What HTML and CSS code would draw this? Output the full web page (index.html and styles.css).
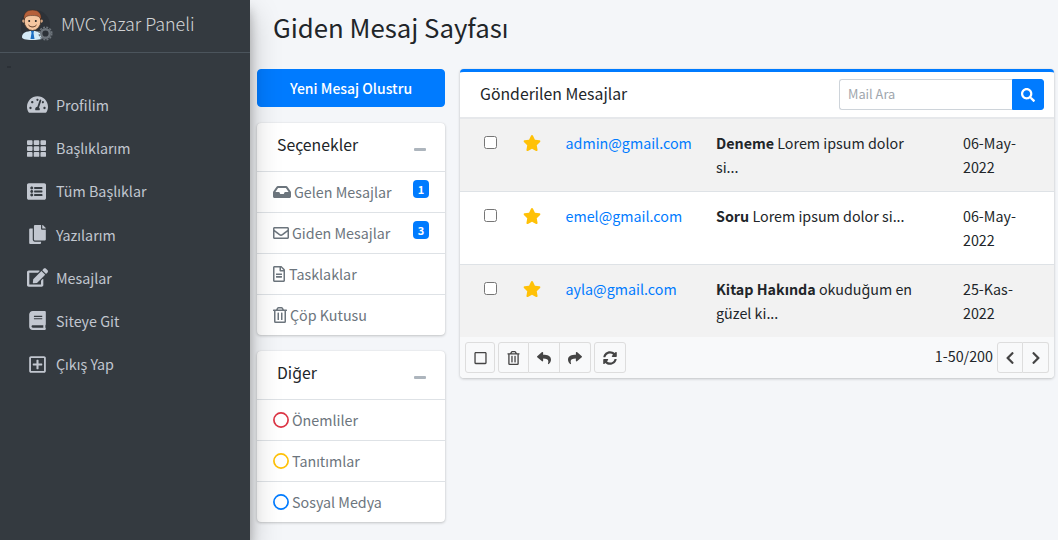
FILE: index.html
```html
<!DOCTYPE html>
<html lang="tr">
<head>
<meta charset="utf-8">
<title>Giden Mesaj Sayfası</title>
<link rel="stylesheet" href="styles.css">
</head>
<body>
<svg class="defs" width="0" height="0" aria-hidden="true">
<defs>
<symbol id="i-gauge" viewBox="0 0 576 512"><path d="M288 32C128.94 32 0 160.94 0 320c0 52.8 14.25 102.26 39.06 144.8 5.61 9.62 16.3 15.2 27.44 15.2h443c11.14 0 21.83-5.58 27.44-15.2C561.75 422.26 576 372.8 576 320c0-159.06-128.94-288-288-288zm0 64c14.71 0 26.58 10.13 30.32 23.65-1.11 2.26-2.64 4.23-3.45 6.67l-9.22 27.67c-5.13 3.49-10.97 6.01-17.64 6.01-17.67 0-32-14.33-32-32S270.33 96 288 96zM96 384c-17.67 0-32-14.33-32-32s14.33-32 32-32 32 14.33 32 32-14.33 32-32 32zm48-160c-17.67 0-32-14.33-32-32s14.33-32 32-32 32 14.33 32 32-14.33 32-32 32zm246.77-72.41l-61.33 184C343.13 347.33 352 364.54 352 384c0 11.72-3.38 22.55-8.88 32H232.88c-5.5-9.45-8.88-20.28-8.88-32 0-33.94 26.5-61.43 59.9-63.59l61.34-184.01c4.17-12.56 17.73-19.45 30.36-15.17 12.57 4.19 19.35 17.77 15.17 30.36zm14.66 57.2l15.52-46.55c3.47-1.29 7.13-2.23 11.05-2.23 17.67 0 32 14.33 32 32s-14.33 32-32 32c-11.38-.01-20.89-6.28-26.57-15.22zM480 384c-17.67 0-32-14.33-32-32s14.33-32 32-32 32 14.33 32 32-14.33 32-32 32z"/></symbol>
<symbol id="i-th" viewBox="0 0 512 512"><path d="M24 32h101a24 24 0 0 1 24 24v80a24 24 0 0 1-24 24H24a24 24 0 0 1-24-24V56a24 24 0 0 1 24-24zm181 0h102a24 24 0 0 1 24 24v80a24 24 0 0 1-24 24H205a24 24 0 0 1-24-24V56a24 24 0 0 1 24-24zm182 0h101a24 24 0 0 1 24 24v80a24 24 0 0 1-24 24H387a24 24 0 0 1-24-24V56a24 24 0 0 1 24-24zM24 192h101a24 24 0 0 1 24 24v80a24 24 0 0 1-24 24H24a24 24 0 0 1-24-24v-80a24 24 0 0 1 24-24zm181 0h102a24 24 0 0 1 24 24v80a24 24 0 0 1-24 24H205a24 24 0 0 1-24-24v-80a24 24 0 0 1 24-24zm182 0h101a24 24 0 0 1 24 24v80a24 24 0 0 1-24 24H387a24 24 0 0 1-24-24v-80a24 24 0 0 1 24-24zM24 352h101a24 24 0 0 1 24 24v80a24 24 0 0 1-24 24H24a24 24 0 0 1-24-24v-80a24 24 0 0 1 24-24zm181 0h102a24 24 0 0 1 24 24v80a24 24 0 0 1-24 24H205a24 24 0 0 1-24-24v-80a24 24 0 0 1 24-24zm182 0h101a24 24 0 0 1 24 24v80a24 24 0 0 1-24 24H387a24 24 0 0 1-24-24v-80a24 24 0 0 1 24-24z"/></symbol>
<symbol id="i-list" viewBox="0 0 512 512"><path d="M464 480H48c-26.51 0-48-21.49-48-48V80c0-26.51 21.49-48 48-48h416c26.51 0 48 21.49 48 48v352c0 26.51-21.49 48-48 48zM128 120c-22.091 0-40 17.909-40 40s17.909 40 40 40 40-17.909 40-40-17.909-40-40-40zm0 96c-22.091 0-40 17.909-40 40s17.909 40 40 40 40-17.909 40-40-17.909-40-40-40zm0 96c-22.091 0-40 17.909-40 40s17.909 40 40 40 40-17.909 40-40-17.909-40-40-40zm288-136v-32c0-6.627-5.373-12-12-12H204c-6.627 0-12 5.373-12 12v32c0 6.627 5.373 12 12 12h200c6.627 0 12-5.373 12-12zm0 96v-32c0-6.627-5.373-12-12-12H204c-6.627 0-12 5.373-12 12v32c0 6.627 5.373 12 12 12h200c6.627 0 12-5.373 12-12zm0 96v-32c0-6.627-5.373-12-12-12H204c-6.627 0-12 5.373-12 12v32c0 6.627 5.373 12 12 12h200c6.627 0 12-5.373 12-12z"/></symbol>
<symbol id="i-copy" viewBox="0 0 448 512"><path d="M320 448v40c0 13.255-10.745 24-24 24H24c-13.255 0-24-10.745-24-24V120c0-13.255 10.745-24 24-24h72v296c0 30.879 25.121 56 56 56h168zm0-344V0H152c-13.255 0-24 10.745-24 24v368c0 13.255 10.745 24 24 24h272c13.255 0 24-10.745 24-24V128H344c-13.2 0-24-10.8-24-24zm120.971-31.029L375.029 7.029A24 24 0 0 0 358.059 0H352v96h96v-6.059a24 24 0 0 0-7.029-16.97z"/></symbol>
<symbol id="i-edit" viewBox="0 0 576 512"><path d="M402.6 83.2l90.2 90.2c3.8 3.8 3.8 10 0 13.8L274.4 405.6l-92.8 10.3c-12.4 1.4-22.9-9.1-21.5-21.5l10.3-92.8L388.8 83.2c3.8-3.8 10-3.8 13.8 0zm162-22.9l-48.8-48.8c-15.2-15.2-39.9-15.2-55.2 0l-35.4 35.4c-3.8 3.8-3.8 10 0 13.8l90.2 90.2c3.8 3.8 10 3.8 13.8 0l35.4-35.4c15.2-15.3 15.2-40 0-55.2zM384 346.2V448H64V128h229.8c3.2 0 6.2-1.3 8.5-3.5l40-40c7.6-7.6 2.2-20.5-8.5-20.5H48C21.5 64 0 85.5 0 112v352c0 26.5 21.5 48 48 48h352c26.5 0 48-21.5 48-48V306.2c0-10.7-12.9-16-20.5-8.5l-40 40c-2.2 2.3-3.5 5.3-3.5 8.5z"/></symbol>
<symbol id="i-book" viewBox="0 0 448 512"><path d="M448 360V24c0-13.3-10.7-24-24-24H96C43 0 0 43 0 96v320c0 53 43 96 96 96h328c13.3 0 24-10.7 24-24v-16c0-7.5-3.5-14.3-8.9-18.7-4.2-15.4-4.2-59.3 0-74.7 5.4-4.3 8.9-11.1 8.9-18.6zM128 134c0-3.3 2.7-6 6-6h212c3.3 0 6 2.7 6 6v20c0 3.3-2.7 6-6 6H134c-3.3 0-6-2.7-6-6v-20zm0 64c0-3.3 2.7-6 6-6h212c3.3 0 6 2.7 6 6v20c0 3.3-2.7 6-6 6H134c-3.3 0-6-2.7-6-6v-20zm253.4 250H96c-17.7 0-32-14.3-32-32 0-17.6 14.4-32 32-32h285.4c-1.9 17.1-1.9 46.9 0 64z"/></symbol>
<symbol id="i-plus" viewBox="0 0 448 512"><path d="M352 240v32c0 6.6-5.4 12-12 12h-88v88c0 6.6-5.4 12-12 12h-32c-6.6 0-12-5.4-12-12v-88h-88c-6.6 0-12-5.4-12-12v-32c0-6.6 5.4-12 12-12h88v-88c0-6.6 5.4-12 12-12h32c6.6 0 12 5.4 12 12v88h88c6.6 0 12 5.4 12 12zm96-160v352c0 26.5-21.5 48-48 48H48c-26.5 0-48-21.5-48-48V80c0-26.5 21.5-48 48-48h352c26.5 0 48 21.5 48 48zm-48 346V86c0-3.3-2.7-6-6-6H54c-3.3 0-6 2.7-6 6v340c0 3.3 2.7 6 6 6h340c3.3 0 6-2.7 6-6z"/></symbol>
<symbol id="i-inbox" viewBox="0 0 576 512"><path d="M567.938 243.908L462.25 85.374A48.003 48.003 0 0 0 422.311 64H153.689a48 48 0 0 0-39.938 21.374L8.062 243.908A47.994 47.994 0 0 0 0 270.533V400c0 26.51 21.49 48 48 48h480c26.51 0 48-21.49 48-48V270.533a47.994 47.994 0 0 0-8.062-26.625zM162.252 128h251.497l85.333 128H376l-32 64H232l-32-64H76.918l85.334-128z"/></symbol>
<symbol id="i-mail" viewBox="0 0 512 512"><path d="M464 64H48C21.49 64 0 85.49 0 112v288c0 26.51 21.49 48 48 48h416c26.51 0 48-21.49 48-48V112c0-26.51-21.49-48-48-48zm0 48v40.805c-22.422 18.259-58.168 46.651-134.587 106.49-16.841 13.247-50.201 45.072-73.413 44.701-23.208.375-56.579-31.459-73.413-44.701C106.18 199.465 70.425 171.067 48 152.805V112h416zM48 400V214.398c22.914 18.251 55.409 43.862 104.938 82.646 21.857 17.205 60.134 55.186 103.062 54.955 42.717.231 80.509-37.199 103.053-54.947 49.528-38.783 82.032-64.401 104.947-82.653V400H48z"/></symbol>
<symbol id="i-file" viewBox="0 0 384 512"><path d="M288 248v28c0 6.6-5.4 12-12 12H108c-6.6 0-12-5.4-12-12v-28c0-6.6 5.4-12 12-12h168c6.6 0 12 5.4 12 12zm-12 72H108c-6.6 0-12 5.4-12 12v28c0 6.6 5.4 12 12 12h168c6.6 0 12-5.4 12-12v-28c0-6.6-5.4-12-12-12zm108-188.1V464c0 26.5-21.5 48-48 48H48c-26.5 0-48-21.5-48-48V48C0 21.5 21.5 0 48 0h204.1C264.8 0 277 5.1 286 14.1L369.9 98c9 8.9 14.1 21.2 14.1 33.9zm-128-80V128h76.1L256 51.9zM336 464V176H232c-13.3 0-24-10.7-24-24V48H48v416h288z"/></symbol>
<symbol id="i-trash" viewBox="0 0 448 512"><path d="M268 416h24a12 12 0 0 0 12-12V188a12 12 0 0 0-12-12h-24a12 12 0 0 0-12 12v216a12 12 0 0 0 12 12zM432 80h-82.41l-34-56.7A48 48 0 0 0 274.41 0H173.59a48 48 0 0 0-41.16 23.3L98.41 80H16A16 16 0 0 0 0 96v16a16 16 0 0 0 16 16h16v336a48 48 0 0 0 48 48h288a48 48 0 0 0 48-48V128h16a16 16 0 0 0 16-16V96a16 16 0 0 0-16-16zM171.84 50.91A6 6 0 0 1 177 48h94a6 6 0 0 1 5.15 2.91L293.61 80H154.39zM368 464H80V128h288zm-212-48h24a12 12 0 0 0 12-12V188a12 12 0 0 0-12-12h-24a12 12 0 0 0-12 12v216a12 12 0 0 0 12 12z"/></symbol>
<symbol id="i-star" viewBox="0 0 576 512"><path d="M259.3 17.8L194 150.2 47.9 171.5c-26.2 3.8-36.7 36.1-17.7 54.6l105.7 103-25 145.5c-4.5 26.3 23.2 46 46.4 33.7L288 439.6l130.7 68.7c23.2 12.2 50.9-7.4 46.4-33.7l-25-145.5 105.7-103c19-18.5 8.5-50.8-17.7-54.6L382 150.2 316.7 17.8c-11.7-23.6-45.6-23.9-57.4 0z"/></symbol>
<symbol id="i-search" viewBox="0 0 512 512"><path d="M505 442.7L405.3 343c-4.5-4.5-10.6-7-17-7H372c27.6-35.3 44-79.7 44-128C416 93.1 322.9 0 208 0S0 93.1 0 208s93.1 208 208 208c48.3 0 92.7-16.4 128-44v16.3c0 6.4 2.5 12.5 7 17l99.7 99.7c9.4 9.4 24.6 9.4 33.9 0l28.3-28.3c9.4-9.4 9.4-24.6.1-34zM208 336c-70.7 0-128-57.2-128-128 0-70.7 57.2-128 128-128 70.7 0 128 57.2 128 128 0 70.7-57.2 128-128 128z"/></symbol>
<symbol id="i-reply" viewBox="0 0 512 512"><path d="M8.309 189.836L184.313 37.851C199.719 24.546 224 35.347 224 56.015v80.053c160.629 1.839 288 34.032 288 186.258 0 61.441-39.581 122.309-83.333 154.132-13.653 9.931-33.111-2.533-28.077-18.631 45.344-145.012-21.507-183.51-176.59-185.742V360c0 20.7-24.3 31.453-39.687 18.164l-176.004-152c-11.071-9.562-11.086-26.753 0-36.328z"/></symbol>
<symbol id="i-share" viewBox="0 0 512 512"><path d="M503.691 189.836L327.687 37.851C312.281 24.546 288 35.347 288 56.015v80.053C127.371 137.907 0 170.1 0 322.326c0 61.441 39.581 122.309 83.333 154.132 13.653 9.931 33.111-2.533 28.077-18.631C66.066 312.814 132.917 274.316 288 272.085V360c0 20.7 24.3 31.453 39.687 18.164l176.004-152c11.071-9.562 11.086-26.753 0-36.328z"/></symbol>
<symbol id="i-sync" viewBox="0 0 512 512"><path d="M370.72 133.28C339.458 104.008 298.888 87.962 255.848 88c-77.458.068-144.328 53.178-162.791 126.85-1.344 5.363-6.122 9.15-11.651 9.15H24.103c-7.498 0-13.194-6.807-11.807-14.176C33.933 94.924 134.813 8 256 8c66.448 0 126.791 26.136 171.315 68.685L463.03 40.97C478.149 25.851 504 36.559 504 57.941V192c0 13.255-10.745 24-24 24H345.941c-21.382 0-32.09-25.851-16.971-40.971l41.75-41.749zM32 296h134.059c21.382 0 32.09 25.851 16.971 40.971l-41.75 41.75c31.262 29.273 71.835 45.319 114.876 45.28 77.418-.07 144.315-53.144 162.787-126.849 1.344-5.363 6.122-9.15 11.651-9.15h57.304c7.498 0 13.194 6.807 11.807 14.176C478.067 417.076 377.187 504 256 504c-66.448 0-126.791-26.136-171.315-68.685L48.97 471.03C33.851 486.149 8 475.441 8 454.059V320c0-13.255 10.745-24 24-24z"/></symbol>
<symbol id="i-left" viewBox="0 0 320 512"><path d="M34.52 239.03L228.87 44.69c9.37-9.37 24.57-9.37 33.94 0l22.67 22.67c9.36 9.36 9.37 24.52.04 33.9L131.49 256l154.02 154.75c9.34 9.38 9.32 24.54-.04 33.9l-22.67 22.67c-9.37 9.37-24.57 9.37-33.94 0L34.52 272.97c-9.37-9.37-9.37-24.57 0-33.94z"/></symbol>
<symbol id="i-right" viewBox="0 0 320 512"><path d="M285.476 272.971L91.132 467.314c-9.373 9.373-24.569 9.373-33.941 0l-22.667-22.667c-9.357-9.357-9.375-24.522-.04-33.901L188.505 256 34.484 101.255c-9.335-9.379-9.317-24.544.04-33.901l22.667-22.667c9.373-9.373 24.569-9.373 33.941 0L285.475 239.03c9.373 9.372 9.373 24.568.001 33.941z"/></symbol>
<symbol id="i-square" viewBox="0 0 448 512"><path d="M400 32H48C21.5 32 0 53.5 0 80v352c0 26.5 21.5 48 48 48h352c26.5 0 48-21.5 48-48V80c0-26.5-21.500-48-48-48zm-6 400H54c-3.3 0-6-2.700-6-6V86c0-3.300 2.700-6 6-6h340c3.300 0 6 2.700 6 6v340c0 3.300-2.700 6-6 6z"/></symbol>
<symbol id="i-ring" viewBox="0 0 16 16"><circle cx="8" cy="8" r="7.100" fill="none" stroke="currentColor" stroke-width="1.700"/></symbol>
</defs>
</svg>
<div class="app">
  <aside class="sidebar">
    <a class="brand" href="#">
      <svg class="brand-logo" viewBox="0 0 33 33" aria-hidden="true">
        <circle cx="14" cy="17" r="15" fill="#2d3238"/>
        <path d="M1 29c0-4 4-6 10.500-6S22 25 22 29c0 2-3 3-10.500 3S1 31 1 29z" fill="#d4eaf7"/>
        <path d="M9.800 22.500h3.400l-.7 2.500 1 6h-4l1-6z" fill="#1c6fc4"/>
        <circle cx="3" cy="13" r="1.800" fill="#eeb78e"/>
        <circle cx="20" cy="13" r="1.800" fill="#eeb78e"/>
        <ellipse cx="11.500" cy="13" rx="8.300" ry="9.500" fill="#f5c6a0" stroke="#3a2a20" stroke-width=".7"/>
        <path d="M3 12C2 5 6 2 11.500 2S21 5 20 12c-1-3-2.500-4.500-8.500-4.500S4 9 3 12z" fill="#b5603a" stroke="#3a2a20" stroke-width=".5"/>
        <circle cx="8.200" cy="13" r="1" fill="#222"/>
        <circle cx="14.800" cy="13" r="1" fill="#222"/>
        <path d="M7.500 17c2 2.500 6 2.500 8 0" fill="none" stroke="#4a2b1c" stroke-width="1"/>
        <circle cx="24.500" cy="25.500" r="4.300" fill="#2d3238" stroke="#6d747b" stroke-width="2.400"/>
        <circle cx="24.500" cy="25.500" r="6.300" fill="none" stroke="#6d747b" stroke-width="1.500" stroke-dasharray="2 1.300"/>
      </svg>
      <span class="brand-text">MVC Yazar Paneli</span>
    </a>
    <span class="brand-dot"></span>
    <nav class="side-nav">
      <a class="side-link" href="#"><span class="side-icon"><svg class="s-gauge"><use href="#i-gauge"/></svg></span>Profilim</a>
      <a class="side-link" href="#"><span class="side-icon"><svg class="s-th"><use href="#i-th"/></svg></span>Başlıklarım</a>
      <a class="side-link" href="#"><span class="side-icon"><svg class="s-th"><use href="#i-list"/></svg></span>Tüm Başlıklar</a>
      <a class="side-link" href="#"><span class="side-icon"><svg class="s-book"><use href="#i-copy"/></svg></span>Yazılarım</a>
      <a class="side-link" href="#"><span class="side-icon"><svg class="s-gauge"><use href="#i-edit"/></svg></span>Mesajlar</a>
      <a class="side-link" href="#"><span class="side-icon"><svg class="s-book"><use href="#i-book"/></svg></span>Siteye Git</a>
      <a class="side-link" href="#"><span class="side-icon"><svg class="s-book"><use href="#i-plus"/></svg></span>Çıkış Yap</a>
    </nav>
  </aside>
  <main class="content">
    <h1 class="page-title">Giden Mesaj Sayfası</h1>
    <div class="columns">
      <div class="left-col">
        <a class="new-btn" href="#">Yeni Mesaj Olustru</a>
        <section class="card">
          <header class="card-head"><h3>Seçenekler</h3><span class="minus"></span></header>
          <ul class="folder-list">
            <li><a href="#"><svg class="f-inbox"><use href="#i-inbox"/></svg>Gelen Mesajlar</a><span class="badge">1</span></li>
            <li><a href="#"><svg class="f-mail"><use href="#i-mail"/></svg>Giden Mesajlar</a><span class="badge">3</span></li>
            <li><a href="#"><svg class="f-file"><use href="#i-file"/></svg>Tasklaklar</a></li>
            <li><a href="#"><svg class="f-trash"><use href="#i-trash"/></svg>Çöp Kutusu</a></li>
          </ul>
        </section>
        <section class="card">
          <header class="card-head"><h3>Diğer</h3><span class="minus"></span></header>
          <ul class="folder-list">
            <li><a href="#"><svg class="ring ring-red"><use href="#i-ring"/></svg>Önemliler</a></li>
            <li><a href="#"><svg class="ring ring-yellow"><use href="#i-ring"/></svg>Tanıtımlar</a></li>
            <li><a href="#"><svg class="ring ring-blue"><use href="#i-ring"/></svg>Sosyal Medya</a></li>
          </ul>
        </section>
      </div>
      <section class="card mail-card">
        <header class="mail-head">
          <h3>Gönderilen Mesajlar</h3>
          <div class="search">
            <input type="text" placeholder="Mail Ara">
            <button type="button"><svg><use href="#i-search"/></svg></button>
          </div>
        </header>
        <table class="mail-table">
          <tbody>
            <tr>
              <td class="c-check"><input type="checkbox"></td>
              <td class="c-star"><svg><use href="#i-star"/></svg></td>
              <td class="c-mail"><a href="#">admin@gmail.com</a></td>
              <td class="c-subject"><b>Deneme</b> Lorem ipsum dolor si...</td>
              <td class="c-date">06-May-2022</td>
            </tr>
            <tr>
              <td class="c-check"><input type="checkbox"></td>
              <td class="c-star"><svg><use href="#i-star"/></svg></td>
              <td class="c-mail"><a href="#">emel@gmail.com</a></td>
              <td class="c-subject"><b>Soru</b> Lorem ipsum dolor si...</td>
              <td class="c-date">06-May-2022</td>
            </tr>
            <tr>
              <td class="c-check"><input type="checkbox"></td>
              <td class="c-star"><svg><use href="#i-star"/></svg></td>
              <td class="c-mail"><a href="#">ayla@gmail.com</a></td>
              <td class="c-subject"><b>Kitap Hakında</b> okuduğum en güzel ki...</td>
              <td class="c-date">25-Kas-2022</td>
            </tr>
          </tbody>
        </table>
        <footer class="mail-foot">
          <button class="tool" type="button"><svg class="t-square"><use href="#i-square"/></svg></button>
          <div class="tool-group">
            <button class="tool" type="button"><svg class="t-square"><use href="#i-trash"/></svg></button>
            <button class="tool" type="button"><svg class="t-arrow"><use href="#i-reply"/></svg></button>
            <button class="tool" type="button"><svg class="t-arrow"><use href="#i-share"/></svg></button>
          </div>
          <button class="tool tool-wide" type="button"><svg class="t-arrow"><use href="#i-sync"/></svg></button>
          <span class="pager-text">1-50/200</span>
          <div class="tool-group pager">
            <button class="tool" type="button"><svg class="t-chev"><use href="#i-left"/></svg></button>
            <button class="tool" type="button"><svg class="t-chev"><use href="#i-right"/></svg></button>
          </div>
        </footer>
      </section>
    </div>
  </main>
</div>
</body>
</html>
```

FILE: styles.css
```css
* { box-sizing: border-box; }
html, body { margin: 0; height: 100%; overflow: hidden; }
body {
  font-family: "Noto Sans CJK JP", "Noto Sans", sans-serif;
  font-size: 14.3px;
  line-height: 24px;
  color: #212529;
  background: #f4f6f9;
}
a { text-decoration: none; color: inherit; }
svg { fill: currentColor; display: block; }
.defs { position: absolute; }
h1, h3 { margin: 0; font-weight: 400; }
ul { list-style: none; margin: 0; padding: 0; }

.app { display: flex; height: 540px; }

.sidebar {
  width: 250px;
  flex: none;
  background: #343a40;
  box-shadow: 0 14px 28px rgba(0,0,0,.25), 0 10px 10px rgba(0,0,0,.22);
  position: relative;
  z-index: 2;
}
.brand {
  display: flex;
  align-items: center;
  gap: 7px;
  height: 53px;
  padding: 0 0 4px 21px;
  border-bottom: 1px solid #4b545c;
}
.brand-logo { width: 33px; height: 33px; flex: none; }
.brand-text { margin-bottom: 2px; font-size: 17.9px; font-weight: 300; color: rgba(255,255,255,.8); }
.brand-dot { display: block; width: 4px; height: 2px; margin: 13px 0 0 7px; background: #2b3036; }
.side-nav { display: flex; flex-direction: column; margin-top: 15.4px; padding: 0 8px; }
.side-link {
  display: flex;
  align-items: center;
  height: 43.2px;
  padding-left: 19px;
  color: #c2c7d0;
}
.side-icon { width: 29px; display: flex; justify-content: flex-start; }
.s-gauge { width: 21px; height: 19px; }
.s-th { width: 19px; height: 19px; }
.s-book { width: 17px; height: 19px; margin-left: 2px; }

.content { flex: 1; min-width: 0; padding: 0 4px 0 7px; }
.page-title { font-size: 25.75px; line-height: 34px; padding: 10px 0 0 16px; height: 69px; color: #212529; }
.columns { display: grid; grid-template-columns: 188px 594px; column-gap: 15px; align-items: start; }
.left-col { display: flex; flex-direction: column; gap: 16px; }

.new-btn {
  display: block;
  height: 38px;
  line-height: 36px;
  border: 1px solid #007bff;
  border-radius: 4px;
  background: #007bff;
  color: #fff;
  font-size: 14px;
  font-weight: 500;
  text-align: center;
}
.card {
  background: #fff;
  border-radius: 4px;
  box-shadow: 0 0 1px rgba(0,0,0,.125), 0 1px 3px rgba(0,0,0,.2);
}
.card-head {
  display: flex;
  align-items: center;
  justify-content: space-between;
  height: 49px;
  padding: 0 19px 0 20px;
  border-bottom: 1px solid #dee2e6;
}
.card-head h3 { font-size: 15.8px; line-height: 1.2; margin-bottom: 4px; }
.minus { display: block; width: 12px; height: 3px; margin-top: 4px; background: #adb5bd; border-radius: 1px; }
.folder-list li {
  display: flex;
  justify-content: space-between;
  align-items: flex-start;
  height: 41px;
  padding: 8px 16px;
  border-bottom: 1px solid #dee2e6;
  color: #6c757d;
}
.folder-list li:last-child { border-bottom: 0; height: 40px; }
.folder-list a { display: flex; align-items: center; height: 24px; }
.folder-list svg { flex: none; height: 16px; margin-right: 3px; }
.f-inbox { width: 18px; }
.f-mail { width: 16px; }
.f-file { width: 12px; margin-right: 4px !important; }
.f-trash { width: 14px; }
.badge {
  width: 16px;
  height: 18px;
  border-radius: 4px;
  background: #007bff;
  color: #fff;
  font-size: 11px;
  font-weight: 700;
  line-height: 18px;
  text-align: center;
}
.ring { width: 16px; }
.ring-red { color: #dc3545; }
.ring-yellow { color: #ffc107; }
.ring-blue { color: #007bff; }

.mail-card { border-top: 3px solid #007bff; }
.mail-head {
  display: flex;
  align-items: center;
  justify-content: space-between;
  height: 47px;
  padding: 0 10px 0 20px;
  border-bottom: 2px solid #e6e8eb;
}
.mail-head h3 { font-size: 15.8px; line-height: 1.2; }
.search { display: flex; width: 205px; height: 31px; }
.search input {
  flex: 1;
  min-width: 0;
  border: 1px solid #ced4da;
  border-right: 0;
  border-radius: 3px 0 0 3px;
  padding: 0 8px 2px;
  font: inherit;
  font-size: 12.8px;
  color: #495057;
  background: #fff;
}
.search input::placeholder { color: #a0a6ad; opacity: 1; }
.search button {
  width: 32px;
  border: 1px solid #007bff;
  border-radius: 0 3px 3px 0;
  background: #007bff;
  color: #fff;
  display: flex;
  align-items: center;
  justify-content: center;
  padding: 0;
}
.search svg { width: 14px; height: 14px; }

.mail-table { width: 100%; border-collapse: collapse; table-layout: fixed; }
.mail-table td { padding: 12px; vertical-align: top; border-top: 1px solid #dee2e6; }
.mail-table tr:first-child td { border-top: 0; }
.mail-table tr:nth-child(odd) { background: #f2f2f2; }
.c-check { width: 50px; padding-left: 24px !important; padding-right: 0 !important; }
.c-check input { display: block; width: 13px; height: 13px; margin: 5px 0 0; }
.c-star { width: 44px; padding-left: 13px !important; padding-right: 0 !important; }
.c-star svg { width: 18px; height: 16px; margin-top: 4px; color: #ffc107; }
.c-mail { width: 150px; padding-left: 11.5px !important; padding-right: 0 !important; }
.c-mail a { color: #007bff; }
.c-subject { width: 247px; padding-right: 33px !important; }
.c-date { padding-right: 30px !important; }

.mail-foot {
  display: flex;
  align-items: center;
  gap: 3px;
  height: 41px;
  padding: 0 5px;
  background: #f8f9fa;
  border-radius: 0 0 4px 4px;
}
.tool {
  width: 30px;
  height: 31px;
  padding: 0;
  border: 1px solid #ddd;
  border-radius: 3px;
  background: #f8f9fa;
  color: #444;
  display: flex;
  align-items: center;
  justify-content: center;
}
.tool-wide { width: 32px; }
.tool-group { display: flex; }
.tool-group .tool { border-radius: 0; border-left: 0; width: 31px; }
.tool-group .tool:first-child { border-left: 1px solid #ddd; border-radius: 3px 0 0 3px; }
.tool-group .tool:last-child { border-radius: 0 3px 3px 0; }
.pager .tool { width: 26px; }
.t-square { width: 13px; height: 14px; }
.t-arrow { width: 14px; height: 14px; }
.t-chev { width: 10px; height: 14px; }
.pager-text { margin-left: auto; margin-right: 1px; margin-bottom: 3px; }
```
